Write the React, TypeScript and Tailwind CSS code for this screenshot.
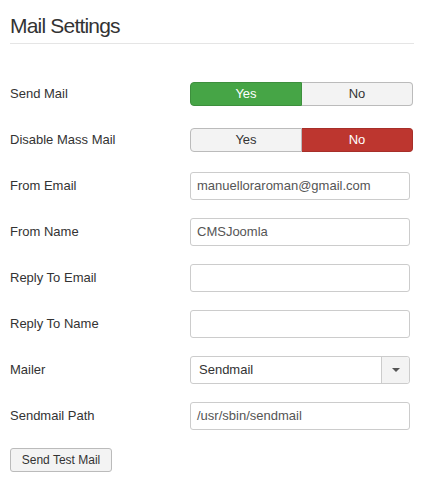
import React from "react";

const font = { fontFamily: '"Liberation Sans", Arial, sans-serif' };

function Row({ label, children }: { label: string; children: React.ReactNode }) {
  return (
    <div className="flex items-center h-[46px]">
      <div className="w-[180px] text-[13px] text-[#333]">{label}</div>
      <div className="flex items-center">{children}</div>
    </div>
  );
}

function Toggle({ yes }: { yes: boolean }) {
  return (
    <div className="flex w-[223px] h-[24px] text-[13px]">
      <div
        className={
          "flex-1 flex items-center justify-center rounded-l-[4px] border " +
          (yes
            ? "bg-[#46a546] border-[#3d8f3d] text-white"
            : "bg-[#f3f3f3] border-[#bbb] text-[#333]")
        }
      >
        Yes
      </div>
      <div
        className={
          "flex-1 flex items-center justify-center rounded-r-[4px] border border-l-0 " +
          (!yes
            ? "bg-[#bd362f] border-[#a72f29] text-white"
            : "bg-[#f3f3f3] border-[#bbb] text-[#333]")
        }
      >
        No
      </div>
    </div>
  );
}

function Input({ value }: { value: string }) {
  return (
    <div className="w-[220px] h-[28px] border border-[#ccc] rounded-[3px] bg-white flex items-center px-[6px] text-[13px] text-[#555]">
      {value}
    </div>
  );
}

export default function App() {
  return (
    <div className="w-[428px] h-[482px] bg-white px-[10px]" style={font}>
      <div className="pt-[13px] h-[44px] border-b border-[#e5e5e5] w-[404px]">
        <h1 className="text-[21px] leading-[26px] tracking-[-0.8px] text-[#333]">Mail Settings</h1>
      </div>
      <div className="pt-[27px]">
        <Row label="Send Mail">
          <Toggle yes={true} />
        </Row>
        <Row label="Disable Mass Mail">
          <Toggle yes={false} />
        </Row>
        <Row label="From Email">
          <Input value="manuelloraroman@gmail.com" />
        </Row>
        <Row label="From Name">
          <Input value="CMSJoomla" />
        </Row>
        <Row label="Reply To Email">
          <Input value="" />
        </Row>
        <Row label="Reply To Name">
          <Input value="" />
        </Row>
        <Row label="Mailer">
          <div className="w-[220px] h-[28px] border border-[#ccc] rounded-[3px] bg-white flex text-[13px] text-[#333]">
            <div className="flex-1 flex items-center px-[8px]">Sendmail</div>
            <div className="w-[28px] border-l border-[#ccc] bg-[#f3f3f3] rounded-r-[3px] flex items-center justify-center">
              <div className="w-0 h-0 border-l-[4px] border-r-[4px] border-t-[4px] border-l-transparent border-r-transparent border-t-[#555]" />
            </div>
          </div>
        </Row>
        <Row label="Sendmail Path">
          <Input value="/usr/sbin/sendmail" />
        </Row>
      </div>
      <div className="mt-[8px]">
        <div className="inline-flex items-center justify-center w-[102px] h-[24px] border border-[#bbb] rounded-[3px] bg-[#f3f3f3] text-[12px] text-[#333]">
          Send Test Mail
        </div>
      </div>
    </div>
  );
}
